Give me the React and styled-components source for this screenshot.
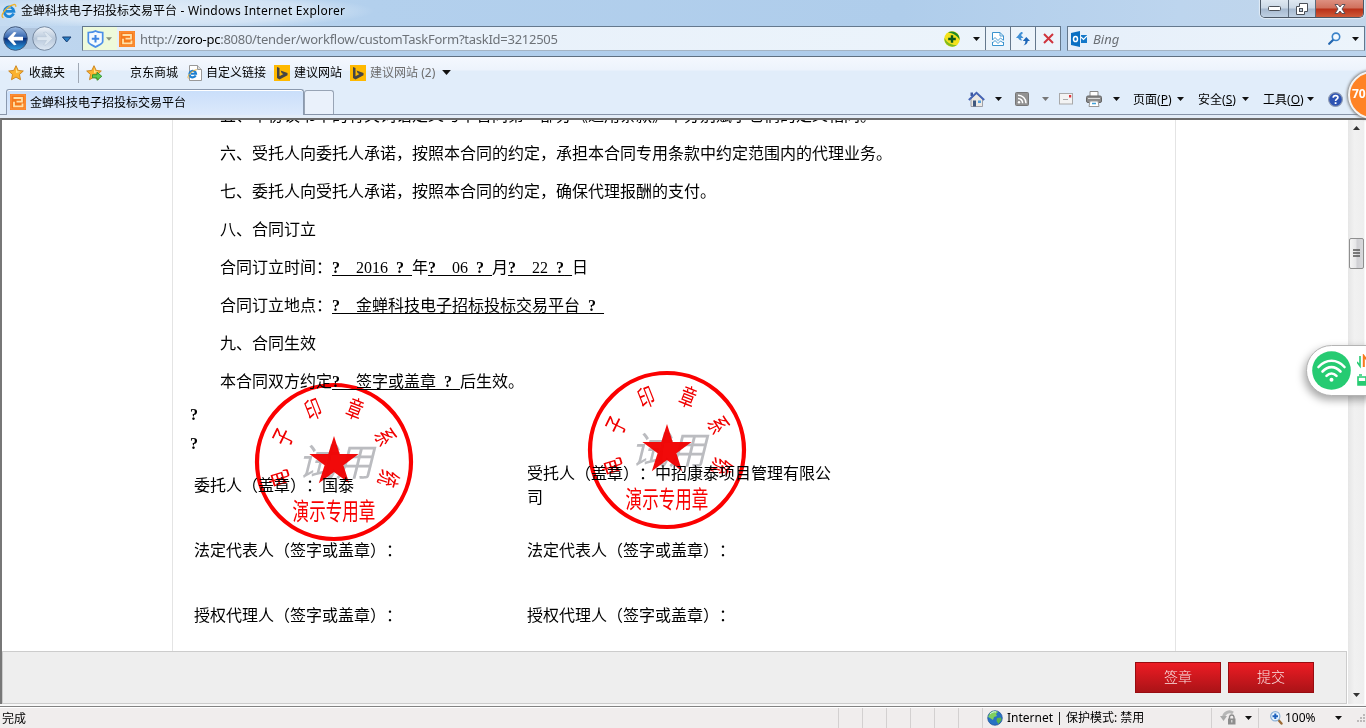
import React from "react";
import styled, { createGlobalStyle } from "styled-components";

const Global = createGlobalStyle`
  *, *::before, *::after { box-sizing: border-box; }
  html, body { margin: 0; padding: 0; overflow: hidden; }
  body { font-family: "Noto Sans", "Noto Sans CJK SC", sans-serif; font-size: 12px; color: #000; text-spacing-trim: space-all; }
  svg { display: block; flex: none; }
`;

const Window = styled.div`
  position: relative;
  width: 1366px;
  height: 728px;
  overflow: hidden;
  display: flex;
  flex-direction: column;
  background: #e3ecf7;
`;

/* ---------- title bar ---------- */
const TitleBar = styled.header`
  height: 26px;
  flex: none;
  display: flex;
  align-items: flex-start;
  padding-left: 1px;
  background:
    radial-gradient(ellipse 200px 18px at 175px 11px, rgba(255, 255, 255, 0.55), rgba(255, 255, 255, 0.35) 70%, transparent),
    linear-gradient(90deg, #c5dbf1 0, #b3d0ed 370px, #afcdeb 900px, #bdd5ee 1180px, #c2d6ea 100%);
`;
const TitleText = styled.h1`
  margin: 0 0 0 4px;
  font-size: 12px;
  font-weight: 400;
  line-height: 22px;
  flex: 1;
  white-space: pre;
`;
const Latin = styled.span`
  letter-spacing: 0.26px;
`;
const WindowButtons = styled.div`
  display: flex;
  width: 104px;
  height: 18px;
  margin-right: 2px;
  border: 1px solid #4c5866;
  border-top: 0;
  border-radius: 0 0 5px 5px;
  overflow: hidden;
  box-shadow: 0 0 1px 1px rgba(255, 255, 255, 0.55);
`;
const WindowButton = styled.button`
  width: ${(p) => p.$w}px;
  padding: 0;
  border: 0;
  border-right: ${(p) => (p.$close ? 0 : "1px solid #5d6b7b")};
  display: flex;
  align-items: center;
  justify-content: center;
  background: ${(p) =>
    p.$close
      ? "linear-gradient(#dd8f80 0, #d0705c 8px, #b93018 9px, #cf5a38 100%)"
      : "linear-gradient(#dfe8f1 0, #cbd8e6 8px, #a6b9cf 9px, #bfd0e2 100%)"};
`;

/* ---------- address row ---------- */
const AddressRow = styled.div`
  height: 31px;
  flex: none;
  display: flex;
  align-items: flex-start;
  padding-left: 2px;
  background: linear-gradient(90deg, #c0d7ef 0, #b2cfec 380px, #aecceb 900px, #bcd4ed 100%);
  border-bottom: 1px solid #5f6f80;
`;
const NavButtons = styled.div`
  width: 80px;
  height: 25px;
  flex: none;
  display: flex;
  align-items: center;
`;
const Field = styled.div`
  height: 25px;
  flex: none;
  display: flex;
  align-items: center;
  width: ${(p) => p.$w}px;
  margin-right: 6px;
  border: 1px solid #64788d;
  border-bottom-color: #a4b4c4;
  background: linear-gradient(90deg, #e6effa, #ecf4fb);
`;
const Shield = styled.div`
  width: 34px;
  height: 23px;
  display: flex;
  align-items: center;
  gap: 2px;
  padding-left: 4px;
  margin-right: 2px;
  background: #eefadb;
`;
const Url = styled.div`
  flex: 1;
  padding-left: 5px;
  font-size: 13px;
  line-height: 22px;
  color: #6d7278;
  letter-spacing: -0.27px;
  b { font-weight: 400; color: #000; }
`;
const FieldButton = styled.div`
  width: 25px;
  height: 23px;
  display: flex;
  align-items: center;
  justify-content: center;
  border-left: 1px solid #64788d;
`;
const SearchText = styled.span`
  flex: 1;
  padding-left: 6px;
  font-size: 13px;
  font-style: italic;
  line-height: 22px;
  color: #6b6f75;
`;

/* ---------- toolbars ---------- */
const FavoritesBar = styled.nav`
  height: 32px;
  flex: none;
  display: flex;
  align-items: center;
  padding: 0 0 1px 8px;
  background: linear-gradient(#f4f8fe 0, #edf3fc 13px, #e1edfa 14px, #e1edfa 100%);
`;
const Slot = styled.span`
  display: flex;
  align-items: center;
  margin-left: ${(p) => p.$before || 0}px;
  width: ${(p) => (p.$w ? p.$w + "px" : "auto")};
  flex: none;
  white-space: pre;
  line-height: 16px;
  color: ${(p) => (p.$muted ? "#6d6d6d" : "#000")};
`;
const Divider = styled.span`
  width: 1px;
  height: 20px;
  margin: 0 7px 0 13px;
  background: #a0a8b4;
`;
const TabRow = styled.div`
  height: 26px;
  flex: none;
  display: flex;
  align-items: flex-end;
  padding-left: 6px;
  background: #e1edfa;
  border-bottom: 1px solid #8794a8;
`;
const Tab = styled.div`
  width: 298px;
  height: 26px;
  margin-bottom: -1px;
  display: flex;
  align-items: center;
  gap: 4px;
  padding: 0 0 2px 3px;
  border: 1px solid #8a99ae;
  border-bottom: 0;
  border-radius: 3px 3px 0 0;
  background: linear-gradient(#c9defa, #dce9fb);
  box-shadow: inset 0 1px 0 #fff;
`;
const NewTab = styled.div`
  width: 30px;
  height: 24px;
  border: 1px solid #98a4b5;
  border-bottom: 0;
  border-radius: 3px 3px 0 0;
  background: #eaf1fb;
`;
const CommandBar = styled.div`
  height: 25px;
  flex: 1;
  display: flex;
  align-items: center;
  padding: 0 0 5px 634px;
`;
const MenuLabel = styled.span`
  width: 44px;
  flex: none;
  padding-top: 2px;
  line-height: 16px;
  white-space: nowrap;
`;

/* ---------- viewport ---------- */
const Viewport = styled.div`
  height: 586px;
  margin-top: 3px;
  flex: none;
  display: flex;
  border-top: 2px solid #6b6b6b;
  border-left: 2px solid #777;
  background: #fff;
`;
const Page = styled.main`
  position: relative;
  width: 1345px;
  height: 584px;
  flex: none;
  display: flex;
  flex-direction: column;
  overflow: hidden;
`;
const Sheet = styled.article`
  position: relative;
  width: 1004px;
  height: 531px;
  flex: none;
  margin-left: 170px;
  border: solid #e4e4e4;
  border-width: 0 1px;
  font-family: "Liberation Serif", "Noto Sans CJK SC", serif;
  font-size: 16px;
  overflow: hidden;
`;
const Clauses = styled.div`
  margin: -23px 0 -1px;
  padding-left: 47px;
`;
const Clause = styled.p`
  margin: 0;
  height: 38px;
  line-height: 38px;
  white-space: pre;
`;
const Blank = styled.u`
  word-spacing: 4px;
  text-underline-offset: 2px;
  text-decoration-thickness: 1px;
  text-decoration-skip-ink: none;
  b { font-weight: 700; }
`;
const Stray = styled.p`
  margin: 0;
  padding-left: 17px;
  height: 29px;
  line-height: 29px;
  font-weight: 700;
`;
const Signatures = styled.div`
  display: grid;
  grid-template-columns: 333px 310px;
  grid-auto-rows: 65px;
  align-items: center;
  padding-left: 21px;
  margin-top: -5px;
  line-height: 24px;
`;
const Party = styled.div`
  width: 306px;
`;
const Stamp = styled.svg`
  position: absolute;
  left: ${(p) => p.$x}px;
  top: ${(p) => p.$y}px;
  mix-blend-mode: multiply;
  font-family: "Noto Sans CJK SC", sans-serif;
`;
const ActionBar = styled.footer`
  height: 53px;
  flex: none;
  display: flex;
  justify-content: flex-end;
  gap: 7px;
  padding: 10px 32px 0 0;
  border: 1px solid #ccc;
  background: #eee;
`;
const ActionButton = styled.button`
  width: 86px;
  height: 31px;
  padding: 0 0 3px;
  border: 1px solid #980c10;
  background: linear-gradient(#ed1c24, #aa1317);
  color: #fae3e3;
  font: 300 14px "Noto Sans CJK SC", sans-serif;
`;
const ScrollBar = styled.div`
  width: 17px;
  height: 584px;
  margin-left: 1px;
  display: flex;
  flex-direction: column;
  align-items: center;
  background: linear-gradient(90deg, #e6e6e6, #f1f1f1 40%, #eee);
  border-right: 1px solid #f8f8f8;
  padding: 6px 0 7px;
`;
const Thumb = styled.div`
  width: 15px;
  height: 31px;
  margin: 108px 0 auto;
  display: flex;
  align-items: center;
  justify-content: center;
  border: 1px solid #8f8f8f;
  border-radius: 2px;
  background: linear-gradient(90deg, #f5f5f5, #e5e5e7 48%, #cfcfd3 52%, #d9d9dc);
`;

/* ---------- status bar ---------- */
const StatusBar = styled.div`
  height: 24px;
  flex: none;
  display: flex;
  align-items: center;
  padding: 1px 0 0 2px;
  border-top: 2px solid #f8f8f8;
  background: #f0eded;
  box-shadow: inset 0 1px 0 #828282, inset 0 2px 0 #fff;
`;
const StatusText = styled.span`
  width: 836px;
  flex: none;
`;
const Pane = styled.div`
  width: ${(p) => p.$w}px;
  height: 20px;
  flex: none;
  display: flex;
  align-items: center;
  border-left: 1px solid #d3d0d0;
`;

/* ---------- floating widgets ---------- */
const SpeedBadge = styled.div`
  position: absolute;
  left: 1348px;
  top: 71px;
  width: 48px;
  height: 48px;
  padding: 13px 0 0 2px;
  border: 2px solid #f4f4f4;
  border-radius: 50%;
  background: #ff8326;
  box-shadow: 0 0 3px 1px #777;
  color: #fff;
  font-size: 12px;
  font-weight: 700;
  line-height: 16px;
`;
const WifiBubble = styled.div`
  position: absolute;
  left: 1306px;
  top: 345px;
  width: 90px;
  height: 51px;
  display: flex;
  align-items: center;
  padding-left: 5px;
  gap: 6px;
  border: 1px solid #b4b4b4;
  border-radius: 26px;
  background: #fff;
  box-shadow: -2px 4px 9px rgba(0, 0, 0, 0.35);
`;

/* ---------- drawings ---------- */
const Arrow = ({ c = "#111", w = 7 }) => (
  <svg width={w} height={w > 7 ? 5 : 4} viewBox="0 0 7 4"><path d="M0 0H7L3.5 4Z" fill={c} /></svg>
);
const IeGlyph = () => (
  <svg width="16" height="22" viewBox="0 -3 16 22">
    <path d="M12.600 10.600A4.800 4.800 0 1 1 12.900 8.300H5" fill="none" stroke="#1d86d6" strokeWidth="2.800" />
    <path d="M5 6.300A3.400 3.400 0 0 1 10 5" fill="none" stroke="#7cc6f4" strokeWidth="1" />
    <path d="M2.500 14.600C-.8 14.200 2 8.300 6.600 4.800S15.500 0 14.700 3.800" fill="none" stroke="#f0b32a" strokeWidth="1.300" />
  </svg>
);
const SiteIcon = () => (
  <svg width="16" height="16" viewBox="0 0 16 16">
    <rect width="16" height="16" fill="#f57a1c" />
    <rect x="1" y="1" width="14" height="14" fill="none" stroke="#ff9a45" />
    <path d="M3.500 4H12V7.700H6.500M4 7.700V12.300H12.500V9.500" fill="none" stroke="#ffe0a8" strokeWidth="1.800" />
  </svg>
);
const BackForward = () => (
  <svg width="72" height="26" viewBox="0 0 72 26">
    <defs>
      <linearGradient id="back" x1="0" y1="0" x2="0" y2="1">
        <stop offset="0" stopColor="#9fbde4" /><stop offset=".45" stopColor="#3566b0" />
        <stop offset=".5" stopColor="#0b2f7c" /><stop offset="1" stopColor="#2fa4e8" />
      </linearGradient>
      <linearGradient id="fwd" x1="0" y1="0" x2="0" y2="1">
        <stop offset="0" stopColor="#eef3f9" /><stop offset=".5" stopColor="#b9c9dc" /><stop offset="1" stopColor="#dfe9f4" />
      </linearGradient>
    </defs>
    <path d="M13 2H42V23H13Z" fill="#a9bdd5" opacity=".7" />
    <circle cx="13.500" cy="12.500" r="11.800" fill="url(#back)" stroke="#41597c" />
    <path d="M5.500 12.600L12 6L14.500 6.500L11.500 10.700H21V14.500H11.500L14.500 18.700L12 19.200Z" fill="#fff" />
    <circle cx="42.500" cy="12.500" r="11.800" fill="url(#fwd)" stroke="#7689a1" />
    <path d="M50.500 12.600L44 6L41.500 6.500L44.500 10.700H35V14.500H44.500L41.500 18.700L44 19.200Z" fill="#dce6f0" stroke="#b7c6d6" strokeWidth=".6" />
    <path d="M60.500 11H69L64.700 16Z" fill="#2a7fc4" stroke="#173e75" />
  </svg>
);
const ShieldIcon = () => (
  <svg width="17" height="18" viewBox="0 0 17 18">
    <path d="M8.500 1C10.500 2.300 13 2.500 15.700 2.500V11.500C15.700 14 11.500 15 8.500 17C5.500 15 1.300 14 1.300 11.500V2.500C4 2.500 6.500 2.300 8.500 1Z" fill="#f5faff" stroke="#4b8fe8" strokeWidth="1.700" />
    <path d="M8.500 5V12.500M4.800 8.700H12.200" stroke="#3f86e4" strokeWidth="2" />
  </svg>
);
const PlusBall = () => (
  <svg width="16" height="16" viewBox="0 0 16 16">
    <circle cx="8" cy="8" r="7.800" fill="#f4e21c" />
    <path d="M4 1.500A7.800 7.800 0 0 1 15.500 9C14 5 9 2 4 1.500Z" fill="#1e8a28" />
    <path d="M.5 7A7.800 7.800 0 0 0 13 14C8 14.500 3 12 .5 7Z" fill="#7dbb20" />
    <path d="M8 4.200V11.800M4.200 8H11.800" stroke="#0c5a1a" strokeWidth="2.400" />
  </svg>
);
const BrokenPage = () => (
  <svg width="12" height="14" viewBox="0 0 12 14">
    <path d="M.5 8V.5H8L11.500 4V8M.5 10V13.500H11.500V10" fill="#fff" stroke="#3a93cf" />
    <path d="M8 .5V4H11.500M.5 8L3 5.500L6 8.500L8.500 6L11.500 8.500M.5 11L3 8.500L6 11.500L8.500 9L11.500 11" fill="none" stroke="#3a93cf" strokeWidth=".9" />
  </svg>
);
const RefreshIcon = () => (
  <svg width="14" height="14" viewBox="0 0 14 14">
    <path d="M6 10L4.800 7.500H7.500L3.700 3L0 7.500H2.200C2.300 8.500 3.500 9.800 6 10Z" fill="#4090d6" transform="translate(0 -1.500) scale(1 1)" />
    <path d="M3.700 5C3.700 2.500 4.500 1 6.500 .5" stroke="#4090d6" strokeWidth="2" fill="none" />
    <path d="M10.300 5L14 9H11.800C11.500 11.500 10 12.800 7.500 13.500C9 12 9.500 10.500 9.300 9H6.800Z" fill="#1c66b8" />
  </svg>
);
const StopIcon = () => (
  <svg width="11" height="11" viewBox="0 0 11 11"><path d="M1 1L10 10M10 1L1 10" stroke="#cf343c" strokeWidth="2" /></svg>
);
const OutlookIcon = () => (
  <svg width="16" height="16" viewBox="0 0 16 16">
    <path d="M0 2L9 0V16L0 14Z" fill="#0a6fc2" />
    <ellipse cx="4.500" cy="8" rx="2" ry="2.600" fill="none" stroke="#fff" strokeWidth="1.500" />
    <path d="M10 4H16V12H10Z" fill="#1478c9" /><path d="M10 6L12.500 8.500L16 5" fill="none" stroke="#fff" strokeWidth="1.200" />
  </svg>
);
const SearchIcon = () => (
  <svg width="13" height="13" viewBox="0 0 13 13">
    <path d="M5.500 7.500L1.200 11.800" stroke="#2467b0" strokeWidth="2.200" strokeLinecap="round" />
    <circle cx="8" cy="4.800" r="3.700" fill="#f4faff" stroke="#3b83c9" strokeWidth="1.600" />
  </svg>
);
const Star = ({ add }) => (
  <svg width="17" height="16" viewBox="0 0 17 16">
    <path d="M8 .7L10.200 5.400L15.300 6L11.500 9.500L12.500 14.700L8 12.100L3.500 14.700L4.500 9.500L.7 6L5.800 5.400Z" fill="#fbb22f" stroke="#c98117" strokeWidth=".9" />
    <path d="M8 2.700L9.300 6.300L12.500 6.700L8 8Z" fill="#ffe48a" />
    {add && <path d="M6.500 9.700H11V7.300L15.800 11.300L11 15.300V12.900H6.500Z" fill="#5ecb51" stroke="#2b8f2a" strokeWidth=".9" />}
  </svg>
);
const IePage = () => (
  <svg width="15" height="16" viewBox="0 0 15 16">
    <path d="M2.500 .5H10.500L14.500 4.500V15.500H2.500Z" fill="#fff" stroke="#999" />
    <path d="M10.500 .5V4.500H14.500" fill="#ddd" stroke="#999" />
    <path d="M8.700 10.500A3.300 3.300 0 1 1 9 8.700H4" fill="none" stroke="#1d7fd0" strokeWidth="2.100" />
    <path d="M1.500 13.500C-.5 12 4 5.500 9.800 4.700" fill="none" stroke="#eab13a" />
  </svg>
);
const BingIcon = () => (
  <svg width="16" height="16" viewBox="0 0 16 16">
    <rect width="16" height="16" fill="#ffb900" />
    <path d="M3 2L5.500 3V11.200L9.500 9L7.700 8.200L6.600 5.500L13.500 8V10.200L5.500 14.500L3 13Z" fill="#454545" />
  </svg>
);
const HomeIcon = () => (
  <svg width="17" height="17" viewBox="0 0 17 17">
    <path d="M3 8V15.500H14.500V8L8.500 2.500Z" fill="#ece9e4" stroke="#8c8c94" strokeWidth=".8" />
    <path d="M2.500 1.500H5V5H2.500Z" fill="#3d56a0" />
    <path d="M.8 9L8.500 1.700L16.200 9" fill="none" stroke="#4664b4" strokeWidth="1.900" />
    <path d="M5 9.500H8V15.500H5Z" fill="#40587e" /><path d="M10 9.500H13V12H10Z" fill="#55a0dc" />
  </svg>
);
const RssIcon = () => (
  <svg width="14" height="14" viewBox="0 0 14 14">
    <rect x=".5" y=".5" width="13" height="13" rx="1" fill="#929292" stroke="#777" />
    <circle cx="4" cy="10.200" r="1.200" fill="#fff" />
    <path d="M3 6.500A4.500 4.500 0 0 1 7.600 11.300M3 3.300A7.800 7.800 0 0 1 11 11.300" fill="none" stroke="#fff" strokeWidth="1.500" />
  </svg>
);
const MailIcon = () => (
  <svg width="14" height="12" viewBox="0 0 14 12">
    <rect x=".5" y=".5" width="13" height="10.500" fill="#f3f3f3" stroke="#a9a9a9" />
    <rect x="10" y="2" width="2.200" height="2.500" fill="#e0323a" /><path d="M4 6.500H9" stroke="#aaa" />
  </svg>
);
const PrintIcon = () => (
  <svg width="16" height="16" viewBox="0 0 16 16">
    <path d="M4 .5H12V6H4Z" fill="#fff" stroke="#888" />
    <rect x=".5" y="5" width="15" height="6.500" rx="1.500" fill="#8a8a8a" stroke="#666" />
    <path d="M2 7.500H14" stroke="#ddd" /><path d="M4 10H12L13 15.500H3Z" fill="#fff" stroke="#999" />
    <path d="M6 12.500H10" stroke="#3fa0d8" strokeWidth="1.500" />
  </svg>
);
const HelpIcon = () => (
  <svg width="15" height="15" viewBox="0 0 15 15">
    <circle cx="7.500" cy="7.500" r="6.900" fill="#2d53b3" stroke="#8f9cb5" strokeWidth="1.200" />
    <path d="M5.200 5.700C5.200 2.800 9.900 3 9.900 5.500C9.900 7.200 7.600 7.200 7.600 9" fill="none" stroke="#fff" strokeWidth="1.700" />
    <rect x="6.700" y="10.200" width="1.800" height="1.800" fill="#fff" />
  </svg>
);
const Globe = () => (
  <svg width="16" height="16" viewBox="0 0 16 16">
    <circle cx="8" cy="8" r="7.300" fill="#2872c4" stroke="#1c4e96" strokeWidth=".7" />
    <path d="M3 3C6 0 10 1 11 2L9 4L10 6L7 7L6 10L3 8L1 7Z" fill="#7fd05e" />
    <path d="M10 8L14 7.500L14.500 10L11.500 14L9.500 11Z" fill="#5bb54a" />
    <path d="M3 4C5 2 7 1.500 9 2" stroke="#d8f3ff" fill="none" />
  </svg>
);
const PrivacyIcon = () => (
  <svg width="17" height="16" viewBox="0 0 17 16">
    <path d="M13 3A6 6 0 0 0 3.500 7" fill="none" stroke="#b7b7b7" strokeWidth="3" />
    <path d="M0 6H7L3.500 11Z" fill="#aaa" />
    <path d="M9.500 9V6.800A2.300 2.300 0 0 1 14 6.800V9" fill="none" stroke="#888" strokeWidth="1.400" />
    <rect x="8" y="8.500" width="7.500" height="6" fill="#8d8d8d" /><path d="M11.800 10V12.500" stroke="#eee" />
  </svg>
);
const ZoomIcon = () => (
  <svg width="13" height="14" viewBox="0 0 13 14">
    <path d="M8 8.500L11.500 12.500" stroke="#9c6a35" strokeWidth="2.400" strokeLinecap="round" />
    <circle cx="5.300" cy="5.300" r="4.600" fill="#eaf6ff" stroke="#8ab0d6" strokeWidth="1.200" />
    <path d="M5.300 2.500V8M2.500 5.300H8" stroke="#1f62bd" strokeWidth="2" />
  </svg>
);
const Grip = () => (
  <svg width="10" height="10" viewBox="0 0 10 10">
    <path d="M7 1H9V3H7ZM7 4H9V6H7ZM4 4H6V6H4ZM7 7H9V9H7ZM4 7H6V9H4ZM1 7H3V9H1Z" fill="#bcb9b9" />
  </svg>
);
const WifiIcon = () => (
  <svg width="39" height="39" viewBox="0 0 39 39">
    <circle cx="19.500" cy="19.500" r="19.300" fill="#26cb72" />
    <g fill="none" stroke="#fff" strokeWidth="2.600" strokeLinecap="round">
      <path d="M6.500 16C14 7.700 25 7.700 32.500 16M10.500 20.500C16 14.700 23 14.700 28.500 20.500M14.500 24.800C17.500 21.800 21.500 21.800 24.500 24.800" />
    </g>
    <circle cx="19.500" cy="28.700" r="2" fill="#fff" />
  </svg>
);
const TrafficIcon = () => (
  <svg width="12" height="34" viewBox="0 0 12 34">
    <path d="M0 8L3 12V2" fill="none" stroke="#26cb72" strokeWidth="1.600" />
    <path d="M6.800 13V2L10 6" fill="none" stroke="#f77a1c" strokeWidth="2" />
    <path d="M1 23H9V31H1ZM2 21H5" fill="none" stroke="#26cb72" strokeWidth="1.600" /><path d="M1 27H9V31H1Z" fill="#26cb72" />
  </svg>
);

const RING = [["电", -107], ["子", -64], ["印", -21.5], ["章", 21.5], ["系", 64], ["统", 107]];
const Seal = ({ x, y }) => (
  <Stamp $x={x} $y={y} width="160" height="160" viewBox="-80 -80 160 160">
    <circle r="77" fill="none" stroke="#fb0000" strokeWidth="4.200" />
    {RING.map(([ch, angle]) => (
      <text key={ch} transform={`rotate(${angle}) translate(0 -57) scale(.66 1)`} y="9" fontSize="24" textAnchor="middle" fill="#f00000">{ch}</text>
    ))}
    <text transform="skewX(-14)" x="5" y="14" fontSize="38" textAnchor="middle" fill="#bbbcc0">试用</text>
    <path d="M0 -26L5.700 -8H24.600L9.400 3.200L15.200 21.200L0 10L-15.200 21.200L-9.400 3.200L-24.600 -8H-5.700Z" fill="#f00000" opacity=".96" />
    <text transform="scale(.69 1)" y="58" fontSize="24" textAnchor="middle" fill="#f80000">演示专用章</text>
  </Stamp>
);

const MENUS = [["页面", "P"], ["安全", "S"], ["工具", "O"]];
const TAB_TITLE = "金蝉科技电子招投标交易平台";

export default function App() {
  return (
    <Window>
      <Global />
      <TitleBar>
        <IeGlyph />
        <TitleText>{TAB_TITLE}<Latin> - Windows Internet Explorer</Latin></TitleText>
        <WindowButtons>
          <WindowButton $w={28}><svg width="13" height="6"><rect x=".5" y=".5" width="12" height="4" rx="1" fill="#fff" stroke="#4b5058" /></svg></WindowButton>
          <WindowButton $w={27}><svg width="12" height="12"><path d="M3.500 .5H11.500V8.500H8.500V11.500H.5V3.500H3.500Z" fill="#fff" stroke="#4b5058" /><rect x="3.500" y="5.500" width="3" height="3" fill="#b9c8d8" stroke="#4b5058" /></svg></WindowButton>
          <WindowButton $w={47} $close><svg width="12" height="10"><path d="M1 .5H4L6 3L8 .5H11L8 5L11 9.500H8L6 7L4 9.500H1L4 5Z" fill="#fff" stroke="#4f4a53" strokeWidth=".9" /></svg></WindowButton>
        </WindowButtons>
      </TitleBar>

      <AddressRow>
        <NavButtons><BackForward /></NavButtons>
        <Field $w={979}>
          <Shield><ShieldIcon /><Arrow c="#8a937c" w={6} /></Shield>
          <SiteIcon />
          <Url>http://<b>zoro-pc</b>:8080/tender/workflow/customTaskForm?taskId=3212505</Url>
          <PlusBall />
          <Slot $before={13} $w={12}><Arrow /></Slot>
          <FieldButton><BrokenPage /></FieldButton>
          <FieldButton><RefreshIcon /></FieldButton>
          <FieldButton><StopIcon /></FieldButton>
        </Field>
        <Field $w={298}>
          <Slot $before={3}><OutlookIcon /></Slot>
          <SearchText>Bing</SearchText>
          <SearchIcon />
          <Slot $before={11} $w={12}><Arrow /></Slot>
        </Field>
      </AddressRow>

      <FavoritesBar>
        <Star />
        <Slot $before={4}>收藏夹</Slot>
        <Divider />
        <Star add />
        <Slot $before={27}>京东商城</Slot>
        <Slot $before={9}><IePage /></Slot>
        <Slot $before={4}>自定义链接</Slot>
        <Slot $before={8}><BingIcon /></Slot>
        <Slot $before={4}>建议网站</Slot>
        <Slot $before={8}><BingIcon /></Slot>
        <Slot $before={4} $w={72} $muted>建议网站 (2)</Slot>
        <Arrow w={9} />
      </FavoritesBar>

      <TabRow>
        <Tab><SiteIcon />{TAB_TITLE}</Tab>
        <NewTab />
        <CommandBar>
          <HomeIcon /><Slot $before={10}><Arrow /></Slot>
          <Slot $before={13}><RssIcon /></Slot><Slot $before={13}><Arrow c="#777" /></Slot>
          <Slot $before={10}><MailIcon /></Slot>
          <Slot $before={13}><PrintIcon /></Slot><Slot $before={11} $w={20}><Arrow /></Slot>
          {MENUS.map(([label, key]) => (
            <React.Fragment key={key}>
              <MenuLabel>{label}(<u>{key}</u>)</MenuLabel>
              <Slot $w={21}><Arrow /></Slot>
            </React.Fragment>
          ))}
          <HelpIcon />
        </CommandBar>
      </TabRow>

      <Viewport>
        <Page>
          <Sheet>
            <Clauses>
              <Clause>五、本协议书中的有关词语定义与本合同第一部分《通用条款》中分别赋予它们的定义相同。</Clause>
              <Clause>六、受托人向委托人承诺，按照本合同的约定，承担本合同专用条款中约定范围内的代理业务。</Clause>
              <Clause>七、委托人向受托人承诺，按照本合同的约定，确保代理报酬的支付。</Clause>
              <Clause>八、合同订立</Clause>
              <Clause>合同订立时间：<Blank><b>?</b>{"  2016 "}<b>?</b> </Blank>年<Blank><b>?</b>{"  06 "}<b>?</b> </Blank>月<Blank><b>?</b>{"  22 "}<b>?</b> </Blank>日</Clause>
              <Clause>合同订立地点：<Blank><b>?</b>{"  金蝉科技电子招标投标交易平台 "}<b>?</b> </Blank></Clause>
              <Clause>九、合同生效</Clause>
              <Clause>本合同双方约定<Blank><b>?</b>{"  签字或盖章 "}<b>?</b> </Blank>后生效。</Clause>
            </Clauses>
            <Stray>?</Stray>
            <Stray>?</Stray>
            <Signatures>
              <Party>委托人（盖章）：国泰</Party>
              <Party>受托人（盖章）：中招康泰项目管理有限公司</Party>
              <Party>法定代表人（签字或盖章）：</Party>
              <Party>法定代表人（签字或盖章）：</Party>
              <Party>授权代理人（签字或盖章）：</Party>
              <Party>授权代理人（签字或盖章）：</Party>
            </Signatures>
            <Seal x={81} y={262} />
            <Seal x={414} y={250} />
          </Sheet>
          <ActionBar>
            <ActionButton>签章</ActionButton>
            <ActionButton>提交</ActionButton>
          </ActionBar>
        </Page>
        <ScrollBar>
          <svg width="7" height="4"><path d="M0 4H7L3.500 0Z" fill="#333" /></svg>
          <Thumb><svg width="7" height="9"><path d="M0 1H7M0 4H7M0 7H7" stroke="#555" strokeWidth="1.300" /></svg></Thumb>
          <Arrow c="#333" />
        </ScrollBar>
      </Viewport>

      <StatusBar>
        <StatusText>完成</StatusText>
        {[24, 24, 24, 24, 24, 24].map((w, i) => <Pane key={i} $w={w} />)}
        <Pane $w={229}><Slot $before={4}><Globe /></Slot><Slot $before={4}>Internet | 保护模式: 禁用</Slot></Pane>
        <Pane $w={47}><Slot $before={8} $w={25}><PrivacyIcon /></Slot><Arrow /></Pane>
        <Pane $w={107}><Slot $before={11}><ZoomIcon /></Slot><Slot $before={2} $w={50}>100%</Slot><Arrow /><Slot $before={14}><Grip /></Slot></Pane>
      </StatusBar>

      <SpeedBadge>70</SpeedBadge>
      <WifiBubble><WifiIcon /><TrafficIcon /></WifiBubble>
    </Window>
  );
}
